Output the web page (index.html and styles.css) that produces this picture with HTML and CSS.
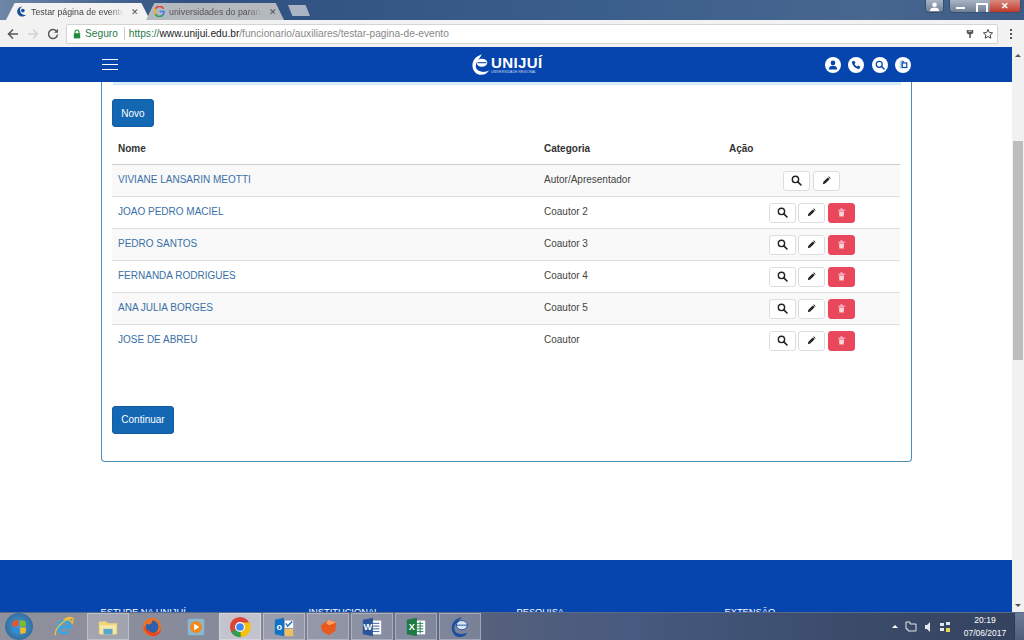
FILE: index.html
```html
<!DOCTYPE html>
<html lang="pt-BR">
<head>
    <meta charset="UTF-8">
    <title>Testar página de evento</title>
    <link rel="stylesheet" href="styles.css">
</head>
<body>
<svg class="defs" width="0" height="0">
    <symbol id="i-search" viewBox="0 0 16 16"><circle cx="6.5" cy="6.5" r="4.6" fill="none" stroke="currentColor" stroke-width="2"/><path d="M10 10l4.5 4.5" stroke="currentColor" stroke-width="2.4" stroke-linecap="round"/></symbol>
    <symbol id="i-pencil" viewBox="0 0 16 16"><path d="M1.5 14.5l1-4.2 7.8-7.8 3.2 3.2-7.8 7.8z" fill="currentColor"/><path d="M11.2 1.6l1-1 3.2 3.2-1 1z" fill="currentColor"/></symbol>
    <symbol id="i-trash" viewBox="0 0 16 16"><path d="M2 3h12v2H2zM6 1h4v1.5H6zM3.5 6h9l-.7 9H4.200z" fill="currentColor"/></symbol>
</svg>

<div class="tabstrip">
    <div class="tab tab-active">
        <svg class="favicon" viewBox="0 0 12 12"><path d="M7 .5A5.500 5.500 0 1 0 11 9.500 5 5 0 0 1 4.500 5 4 4 0 0 1 7 .5z" fill="#1a4f9c"/><circle cx="7.5" cy="5" r="2" fill="#1a4f9c"/></svg>
        <span class="tab-title">Testar página de evento</span>
        <span class="tab-close">✕</span>
    </div>
    <div class="tab tab-other">
        <svg class="favicon" viewBox="0 0 12 12"><path d="M10.5 3A5.200 5.200 0 0 0 1.500 3" stroke="#e2483a" stroke-width="1.8" fill="none"/><path d="M1.500 3a5.200 5.200 0 0 0 0 6" stroke="#f0b400" stroke-width="1.8" fill="none"/><path d="M1.500 9a5.200 5.200 0 0 0 8 1" stroke="#2fa14f" stroke-width="1.8" fill="none"/><path d="M9.500 10c1-1 1.500-2 1.500-4H6.200" stroke="#3f7ee8" stroke-width="1.8" fill="none"/></svg>
        <span class="tab-title">universidades do paraná</span>
        <span class="tab-close">✕</span>
    </div>
    <div class="tab-new"></div>
    <div class="window-btns">
        <div class="win-user"><svg viewBox="0 0 12 10" width="11" height="9"><circle cx="6" cy="3" r="2.5" fill="#fff"/><path d="M1 10c0-3 2-3.500 5-3.500s5 .5 5 3.500z" fill="#fff"/></svg></div>
        <div class="win-group">
            <span class="win-min"></span>
            <span class="win-max"></span>
            <span class="win-close">✕</span>
        </div>
    </div>
</div>

<div class="toolbar">
    <svg class="nav-icon" viewBox="0 0 12 12"><path d="M11 6H2M6 1.500L1.500 6 6 10.500" fill="none" stroke="#555" stroke-width="1.5"/></svg>
    <svg class="nav-icon" viewBox="0 0 12 12"><path d="M1 6h9M6 1.500L10.500 6 6 10.500" fill="none" stroke="#d2d2d2" stroke-width="1.5"/></svg>
    <svg class="nav-icon" viewBox="0 0 12 12"><path d="M10.500 6.500A4.500 4.500 0 1 1 9.200 2.800" fill="none" stroke="#555" stroke-width="1.5"/><path d="M11 .8v4H7z" fill="#555"/></svg>
    <div class="omnibox">
        <svg class="lock" viewBox="0 0 10 12"><path d="M2.500 5V3.500a2.500 2.500 0 0 1 5 0V5" fill="none" stroke="#1f8a3c" stroke-width="1.3"/><rect x="1" y="5" width="8" height="6.5" fill="#1f8a3c"/></svg>
        <span class="secure">Seguro</span>
        <span class="omni-sep"></span>
        <span class="url"><span class="url-https">https://</span><span class="url-host">www.unijui.edu.br</span>/funcionario/auxiliares/testar-pagina-de-evento</span>
        <svg class="omni-key" viewBox="0 0 10 12"><path d="M1 1h8v4L6 6.500V11H4V6.500L1 5z" fill="#555"/><path d="M3 2.500h4" stroke="#fff"/></svg>
        <svg class="omni-star" viewBox="0 0 24 24"><path d="M12 3l2.700 6 6.500.7-4.900 4.300 1.400 6.400L12 17l-5.700 3.400L7.700 14 2.800 9.700 9.300 9z" fill="none" stroke="#444" stroke-width="2"/></svg>
    </div>
    <div class="menu-dots"><i></i><i></i><i></i></div>
</div>

<div class="viewport">
    <div class="page">
        <header class="site-header">
            <div class="hamburger"><i></i><i></i><i></i></div>
            <div class="logo">
                <svg class="logo-mark" viewBox="0 0 20 24"><path d="M11 .5C4 3 .5 7 .5 13c0 6 4.500 10.500 10 10.500 4 0 7-2 8.500-5-3 2-8 2.500-11.500.5C4 17 3.500 13 5 10c1-2.500 3.500-5 6-9.500z" fill="#fff"/><ellipse cx="11" cy="10" rx="6" ry="4.5" fill="#fff"/><path d="M6 10h10" stroke="#0645ad" stroke-width="1.2"/></svg>
                <div class="logo-text">
                    <span class="logo-name">UNIJUÍ</span>
                    <span class="logo-sub">UNIVERSIDADE REGIONAL</span>
                </div>
            </div>
            <div class="header-icons">
                <span class="circle-icon"><svg viewBox="0 0 12 12"><circle cx="6" cy="3.5" r="2.8" fill="#0645ad"/><path d="M1 11.500c0-3.500 2-4.500 5-4.500s5 1 5 4.500z" fill="#0645ad"/></svg></span>
                <span class="circle-icon"><svg viewBox="0 0 12 12"><path d="M2 1.500l2-.7 1.400 2.700-1.200 1.200c.6 1.300 1.700 2.500 3.100 3.100l1.200-1.200 2.700 1.400-.7 2c-.3.700-1 1-1.800.9C4.500 9.500 2.500 7.500 1.100 3.300 1 2.500 1.300 1.800 2 1.500z" fill="#0645ad"/></svg></span>
                <span class="circle-icon"><svg viewBox="0 0 16 16"><circle cx="6.8" cy="6.8" r="4.8" fill="none" stroke="#0645ad" stroke-width="2"/><path d="M10.500 10.500l4 4" stroke="#0645ad" stroke-width="2.4" stroke-linecap="round"/></svg></span>
                <span class="circle-icon"><svg viewBox="0 0 12 12"><path d="M2 1.500l4-1v9l-4 1z" fill="#bcd0ea"/><rect x="5" y="3.5" width="5.5" height="5.5" fill="none" stroke="#0645ad" stroke-width="1.4"/><path d="M4.500 1.500h2v2" fill="none" stroke="#0645ad"/></svg></span>
            </div>
        </header>

        <main class="content">
            <div class="panel">
                <div class="panel-line"></div>
                <a class="btn-primary btn-novo" href="#">Novo</a>
                <table class="people">
                    <thead>
                        <tr><th class="col-name">Nome</th><th class="col-cat">Categoria</th><th class="col-act">Ação</th></tr>
                    </thead>
                    <tbody>
                        <tr>
                            <td><a href="#">VIVIANE LANSARIN MEOTTI</a></td>
                            <td>Autor/Apresentador</td>
                            <td class="actions">
                                <span class="btn-act"><svg><use href="#i-search"/></svg></span>
                                <span class="btn-act"><svg class="small"><use href="#i-pencil"/></svg></span>
                            </td>
                        </tr>
                        <tr>
                            <td><a href="#">JOAO PEDRO MACIEL</a></td>
                            <td>Coautor 2</td>
                            <td class="actions">
                                <span class="btn-act"><svg><use href="#i-search"/></svg></span>
                                <span class="btn-act"><svg class="small"><use href="#i-pencil"/></svg></span>
                                <span class="btn-act btn-del"><svg class="small"><use href="#i-trash"/></svg></span>
                            </td>
                        </tr>
                        <tr>
                            <td><a href="#">PEDRO SANTOS</a></td>
                            <td>Coautor 3</td>
                            <td class="actions">
                                <span class="btn-act"><svg><use href="#i-search"/></svg></span>
                                <span class="btn-act"><svg class="small"><use href="#i-pencil"/></svg></span>
                                <span class="btn-act btn-del"><svg class="small"><use href="#i-trash"/></svg></span>
                            </td>
                        </tr>
                        <tr>
                            <td><a href="#">FERNANDA RODRIGUES</a></td>
                            <td>Coautor 4</td>
                            <td class="actions">
                                <span class="btn-act"><svg><use href="#i-search"/></svg></span>
                                <span class="btn-act"><svg class="small"><use href="#i-pencil"/></svg></span>
                                <span class="btn-act btn-del"><svg class="small"><use href="#i-trash"/></svg></span>
                            </td>
                        </tr>
                        <tr>
                            <td><a href="#">ANA JULIA BORGES</a></td>
                            <td>Coautor 5</td>
                            <td class="actions">
                                <span class="btn-act"><svg><use href="#i-search"/></svg></span>
                                <span class="btn-act"><svg class="small"><use href="#i-pencil"/></svg></span>
                                <span class="btn-act btn-del"><svg class="small"><use href="#i-trash"/></svg></span>
                            </td>
                        </tr>
                        <tr>
                            <td><a href="#">JOSE DE ABREU</a></td>
                            <td>Coautor</td>
                            <td class="actions">
                                <span class="btn-act"><svg><use href="#i-search"/></svg></span>
                                <span class="btn-act"><svg class="small"><use href="#i-pencil"/></svg></span>
                                <span class="btn-act btn-del"><svg class="small"><use href="#i-trash"/></svg></span>
                            </td>
                        </tr>
                    </tbody>
                </table>
                <a class="btn-primary btn-continuar" href="#">Continuar</a>
            </div>
        </main>

        <footer class="site-footer">
            <h4>ESTUDE NA UNIJUÍ</h4>
            <h4>INSTITUCIONAL</h4>
            <h4>PESQUISA</h4>
            <h4>EXTENSÃO</h4>
        </footer>
    </div>
    <div class="scrollbar">
        <span class="arrow-up"></span>
        <div class="thumb"></div>
        <span class="arrow-down"></span>
    </div>
</div>

<div class="taskbar">
    <div class="orb"><svg viewBox="0 0 20 20"><path d="M4 4l5-1 .5 6-6.500.5z" fill="#e8532b"/><path d="M10.500 3l6 1 .5 5.500-6 0z" fill="#7fbb2e"/><path d="M3 10.500l6.500 0 .5 6-6-1z" fill="#2e8fdb"/><path d="M11 10.500h6l-.5 5.500-5 1z" fill="#f6bd21"/></svg></div>
    <div class="task-item"><svg viewBox="0 0 24 24"><path d="M12 4a8 8 0 0 0-8 8 8 8 0 0 0 14.500 4.700H14c-1 1-3.500 1.200-5-.2-.6-.6-1-1.500-1-2.500h12v-2a8 8 0 0 0-8-8zM8 10.500c.2-2 2-3.500 4-3.500s3.800 1.500 4 3.500z" fill="#35a7e8"/><path d="M3 21C1 17 7 6 20 2c3 0 2 3 1 6-1-2.500-4-4.500-8-4.500C17 1 21 1 22 3" fill="none" stroke="#f2c431" stroke-width="1.3"/></svg></div>
    <div class="task-item task-box"><svg viewBox="0 0 24 24"><path d="M2 6h8l2 2h10v12H2z" fill="#f0d678"/><path d="M3 10h18l-1 10H4z" fill="#f8e9a8"/><rect x="7" y="14" width="10" height="6" fill="#58a6c8"/></svg></div>
    <div class="task-item"><svg viewBox="0 0 24 24"><circle cx="12" cy="12" r="10" fill="#e8742a"/><path d="M12 5a7 7 0 1 1-6 3.500C8 10 13 9 12 5z" fill="#2f5fa8"/><path d="M2.500 10C3 16 8 22 14 22c4 0 8-4 8-9-1 4-5 6-9 5-4-1-7-3-10.500-8z" fill="#e8461e"/></svg></div>
    <div class="task-item"><svg viewBox="0 0 24 24"><rect x="3" y="3" width="18" height="18" rx="2" fill="#8ab8cf"/><circle cx="12" cy="12" r="6.5" fill="#f08a1d"/><path d="M10 8.500l5.500 3.500-5.500 3.500z" fill="#fff"/></svg></div>
    <div class="task-item task-box task-on"><svg viewBox="0 0 24 24"><circle cx="12" cy="12" r="11" fill="#db4437"/><path d="M12 12L2.500 17.500A11 11 0 0 0 13 23z" fill="#2f9e4f"/><path d="M12 12L13 23A11 11 0 0 0 22.500 7H12z" fill="#f4c20d"/><circle cx="12" cy="12" r="5.5" fill="#fff"/><circle cx="12" cy="12" r="4.2" fill="#4285f4"/></svg></div>
    <div class="task-item task-box"><svg viewBox="0 0 24 24"><path d="M2 4l10-2v20L2 20z" fill="#0f72c4"/><text x="7" y="15.5" class="ico-letter" text-anchor="middle">o</text><rect x="13" y="5" width="9" height="8" fill="#fff"/><path d="M14 8l2 3 5-5" stroke="#0f72c4" stroke-width="1.5" fill="none"/><rect x="13" y="14" width="9" height="8" fill="#f0c060"/></svg></div>
    <div class="task-item task-box"><svg viewBox="0 0 24 24"><path d="M12 4l9 3-1 9-7 5-7-4-2-6z" fill="#e8591d"/><path d="M12 4l9 3-8 3-3-2z" fill="#f7a36a"/></svg></div>
    <div class="task-item task-box"><svg viewBox="0 0 24 24"><rect x="11" y="5" width="11" height="15" fill="#fff"/><path d="M13 8h7M13 11h7M13 14h7M13 17h7" stroke="#2a5699" stroke-width="1"/><path d="M2 4l11-2v20L2 20z" fill="#2a5699"/><text x="7.5" y="15.5" class="ico-letter" text-anchor="middle">W</text></svg></div>
    <div class="task-item task-box"><svg viewBox="0 0 24 24"><rect x="11" y="5" width="11" height="15" fill="#fff"/><path d="M13 8h7M13 11h7M13 14h7M13 17h7M16.500 6v13" stroke="#1d7a45" stroke-width="1"/><path d="M2 4l11-2v20L2 20z" fill="#1d7a45"/><text x="7.5" y="15.5" class="ico-letter" text-anchor="middle">X</text></svg></div>
    <div class="task-item task-box"><svg viewBox="0 0 24 24"><path d="M14 1C7 3 3 7 3 13c0 6 4 10 9 10 4 0 7-2 8-5-3 2-8 2-11 .5C6 17 5 13 6.500 10 8 7 11 5 14 1z" fill="#1c4f9e"/><ellipse cx="14" cy="10" rx="6" ry="5" fill="#dbe6f5" stroke="#1c4f9e"/><path d="M8 10h12" stroke="#1c4f9e"/></svg></div>
    <div class="tray">
        <span class="tray-up"></span>
        <svg class="tray-ico" viewBox="0 0 12 12"><path d="M1 1h4v2h6v7H3V8H1z" fill="none" stroke="#e4e8ee"/></svg>
        <svg class="tray-ico" viewBox="0 0 12 12"><path d="M3 4h2l3-3v10L5 8H3z" fill="#e4e8ee"/></svg>
        <svg class="tray-ico" viewBox="0 0 12 12"><path d="M1 2h4v3H1zM7 1h4v3H7zM1 7h4v3H1z" fill="#e4e8ee"/><rect x="7" y="7" width="4" height="4" fill="#e8d84a"/></svg>
        <div class="clock"><span>20:19</span><span>07/06/2017</span></div>
        <div class="show-desktop"></div>
    </div>
</div>
</body>
</html>
```

FILE: styles.css
```css
* {
    box-sizing: border-box;
}
html, body {
    height: 640px;
}
body {
    margin: 0;
    overflow: hidden;
    display: flex;
    flex-direction: column;
    font-family: "Liberation Sans", Arial, sans-serif;
    color: #444;
    background: #fff;
}
a {
    text-decoration: none;
}
.defs {
    display: block;
    height: 0;
}

/* browser tabs */
.tabstrip {
    height: 20px;
    flex: none;
    display: flex;
    align-items: flex-end;
    padding-left: 6px;
    background: linear-gradient(90deg, #6d86a6 0, #2f5080 18%, #3b5f8c 60%, #48678f 85%, #3c5b85 100%);
}
.tab {
    height: 17px;
    display: flex;
    align-items: center;
    font-size: 8.8px;
    clip-path: polygon(0 100%, 6% 0, 94% 0, 100% 100%);
}
.tab-active {
    width: 144px;
    padding: 0 11px 0 10px;
    background: #f2f2f2;
    color: #444;
}
.tab-other {
    width: 138px;
    margin-left: -4px;
    padding: 0 7px 0 8px;
    background: #b4b8bf;
    color: #555;
}
.favicon {
    width: 11px;
    height: 11px;
    flex: none;
    margin-right: 4px;
}
.tab-title {
    flex: 1;
    min-width: 0;
    overflow: hidden;
    white-space: nowrap;
    -webkit-mask-image: linear-gradient(90deg, #000 85%, transparent);
    mask-image: linear-gradient(90deg, #000 85%, transparent);
}
.tab-close {
    font-size: 9px;
    margin-left: 7px;
    color: #555;
}
.tab-new {
    width: 22px;
    height: 11px;
    margin: 0 0 4px 4px;
    background: #aab4c4;
    clip-path: polygon(0 0, 80% 0, 100% 100%, 20% 100%);
}
.window-btns {
    margin-left: auto;
    align-self: flex-start;
    display: flex;
    gap: 5px;
    padding-right: 3px;
}
.win-user {
    width: 19px;
    height: 13px;
    display: flex;
    align-items: center;
    justify-content: center;
    background: linear-gradient(#a9b4c3, #6d7f97);
    border: 1px solid #38506f;
    border-top: 0;
    border-radius: 0 0 4px 4px;
}
.win-group {
    width: 72px;
    height: 13px;
    display: flex;
    background: linear-gradient(#a9b4c3, #6d7f97);
    border: 1px solid #38506f;
    border-top: 0;
    border-radius: 0 0 4px 4px;
    overflow: hidden;
}
.win-min, .win-max {
    width: 20px;
    position: relative;
}
.win-min::after {
    content: "";
    position: absolute;
    left: 6px;
    bottom: 3px;
    width: 9px;
    height: 2px;
    background: #fff;
}
.win-max::after {
    content: "";
    position: absolute;
    left: 6px;
    top: 3px;
    width: 8px;
    height: 7px;
    border: 2px solid #fff;
}
.win-close {
    flex: 1;
    background: linear-gradient(#d98a7f, #c0392b);
    color: #fff;
    font-size: 9px;
    font-weight: bold;
    line-height: 12px;
    text-align: center;
}

/* address bar */
.toolbar {
    height: 27px;
    flex: none;
    display: flex;
    align-items: center;
    padding: 0 0 0 7px;
    background: #f2f2f2;
}
.nav-icon {
    width: 12px;
    height: 12px;
    margin-right: 8px;
}
.omnibox {
    height: 20px;
    width: 932px;
    margin-left: -1px;
    display: flex;
    align-items: center;
    padding: 0 3px 0 6px;
    font-size: 10.2px;
    background: #fff;
    border: 1px solid #d4d4d0;
    border-radius: 2px;
}
.lock {
    width: 8px;
    height: 10px;
    margin-right: 4px;
}
.secure {
    color: #2a7a4a;
}
.omni-sep {
    width: 1px;
    height: 13px;
    margin: 0 4px 0 6px;
    background: #ccc;
}
.url {
    flex: 1;
    color: #888;
}
.url-https {
    color: #2a7a4a;
}
.url-host {
    color: #222;
}
.omni-key {
    width: 8px;
    height: 10px;
    margin-right: 8px;
}
.omni-star {
    width: 12px;
    height: 12px;
}
.menu-dots {
    margin-left: 12px;
    display: flex;
    flex-direction: column;
    gap: 2px;
}
.menu-dots i {
    width: 2px;
    height: 2px;
    background: #555;
}

/* page */
.viewport {
    flex: 1;
    min-height: 0;
    display: flex;
}
.page {
    flex: 1;
    min-width: 0;
    display: flex;
    flex-direction: column;
    overflow: hidden;
}
.site-header {
    height: 35px;
    flex: none;
    display: flex;
    align-items: center;
    padding: 0 101px 0 102px;
    background: #0645ad;
}
.hamburger {
    width: 16px;
    display: flex;
    flex-direction: column;
    gap: 3.5px;
}
.hamburger i {
    height: 1.5px;
    background: #fff;
}
.logo {
    margin-left: 354px;
    display: flex;
    align-items: center;
    color: #fff;
}
.logo-mark {
    width: 18px;
    height: 23px;
}
.logo-text {
    display: flex;
    flex-direction: column;
    margin-left: 1px;
}
.logo-name {
    font-size: 15px;
    font-weight: bold;
    line-height: 14px;
    letter-spacing: .4px;
}
.logo-sub {
    font-size: 3.5px;
    line-height: 4px;
    color: #c6d6ef;
}
.header-icons {
    margin-left: auto;
    display: flex;
    gap: 7.5px;
}
.circle-icon {
    width: 16px;
    height: 16px;
    display: flex;
    align-items: center;
    justify-content: center;
    background: #fff;
    border-radius: 50%;
}
.circle-icon svg {
    width: 10px;
    height: 10px;
}
.content {
    height: 478px;
    flex: none;
    padding-left: 101px;
}
.panel {
    width: 811px;
    height: 380px;
    padding: 0 10px;
    border: 1px solid #4d8fb8;
    border-top: 0;
    border-radius: 0 0 4px 4px;
}
.panel-line {
    height: 3px;
    margin: 0 0 14px 1px;
    background: #d5eefa;
}
.btn-primary {
    display: block;
    height: 28px;
    line-height: 26px;
    text-align: center;
    font-size: 10px;
    color: #fff;
    background: #1467b3;
    border: 1px solid #125da3;
    border-radius: 3px;
}
.btn-novo {
    width: 42px;
    line-height: 27px;
}
.btn-continuar {
    width: 62px;
    margin-top: 50px;
}
.people {
    width: 788px;
    margin-top: 6px;
    border-collapse: collapse;
    table-layout: fixed;
    font-size: 10px;
}
.people th {
    height: 31px;
    padding: 0 6px;
    text-align: left;
    font-weight: bold;
    color: #333;
    border-bottom: 1px solid #ccc;
}
.col-name {
    width: 426px;
}
.col-cat {
    width: 185px;
}
.people td {
    height: 32px;
    padding: 0 6px 1px;
    border-bottom: 1px solid #ddd;
}
.people tbody tr:nth-child(odd) {
    background: #f9f9f9;
}
.people tbody tr:last-child td {
    border-bottom: 0;
}
.people a {
    color: #3a6fa5;
}
.people td.actions {
    padding: 1px 6px 0;
    text-align: center;
    font-size: 0;
}
.btn-act {
    display: inline-flex;
    align-items: center;
    justify-content: center;
    vertical-align: middle;
    width: 27px;
    height: 20px;
    margin: 0 1.25px;
    color: #222;
    background: #fff;
    border: 1px solid #ddd;
    border-radius: 3px;
}
.btn-act svg {
    width: 11px;
    height: 11px;
}
.btn-act svg.small {
    width: 9px;
    height: 9px;
}
.btn-del {
    color: #f6d5d9;
    background: #e8475c;
    border-color: #e8475c;
}
.site-footer {
    flex: 1;
    display: grid;
    grid-template-columns: repeat(4, 208px);
    padding: 47px 0 0 100.5px;
    overflow: hidden;
    background: #0645ad;
}
.site-footer h4 {
    margin: 0;
    font-size: 9.3px;
    font-weight: normal;
    color: #fff;
}
.scrollbar {
    width: 12px;
    flex: none;
    display: flex;
    flex-direction: column;
    align-items: center;
    background: #f1f1f1;
}
.arrow-up, .arrow-down {
    width: 0;
    height: 0;
    flex: none;
    border-left: 3px solid transparent;
    border-right: 3px solid transparent;
}
.arrow-up {
    margin: 7px 0 84px;
    border-bottom: 3px solid #555;
}
.thumb {
    width: 10px;
    height: 219px;
    flex: none;
    background: #bdbdbd;
}
.arrow-down {
    margin: auto 0 5px;
    border-top: 3px solid #555;
}

/* windows taskbar */
.taskbar {
    height: 28px;
    flex: none;
    display: flex;
    align-items: center;
    padding-left: 5px;
    background: linear-gradient(90deg, #8f929c 0, #85889a 25%, #55607c 48%, #475a7f 62%, #3c4d6d 80%, #34425e 100%);
    border-top: 1px solid #5a6a88;
}
.orb {
    width: 28px;
    height: 27px;
    padding: 4px;
    margin-right: 10px;
    border-radius: 50%;
    background: radial-gradient(#4c9bd3, #2a5d8c);
}
.orb svg {
    display: block;
}
.task-item {
    width: 42px;
    height: 27px;
    margin-right: 2px;
    display: flex;
    align-items: center;
    justify-content: center;
}
.task-item svg {
    width: 22px;
    height: 22px;
}
.task-box {
    background: rgba(255, 255, 255, .2);
    border: 1px solid rgba(255, 255, 255, .3);
}
.task-on {
    background: rgba(255, 255, 255, .5);
}
.ico-letter {
    font-family: "Liberation Sans", Arial, sans-serif;
    font-size: 10px;
    font-weight: bold;
    fill: #fff;
}
.tray {
    height: 100%;
    margin-left: auto;
    display: flex;
    align-items: center;
    gap: 5px;
    color: #fff;
}
.tray-up {
    width: 0;
    height: 0;
    margin-right: 2px;
    border-left: 3px solid transparent;
    border-right: 3px solid transparent;
    border-bottom: 3px solid #fff;
}
.tray-ico {
    width: 12px;
    height: 12px;
}
.clock {
    width: 42px;
    margin: 0 3px 0 8px;
    display: flex;
    flex-direction: column;
    align-items: center;
    font-size: 8.5px;
    line-height: 13px;
}
.show-desktop {
    width: 10px;
    height: 100%;
    background: linear-gradient(#6c7c98, #4d5d7a);
    border-left: 1px solid #2b3954;
}
```
